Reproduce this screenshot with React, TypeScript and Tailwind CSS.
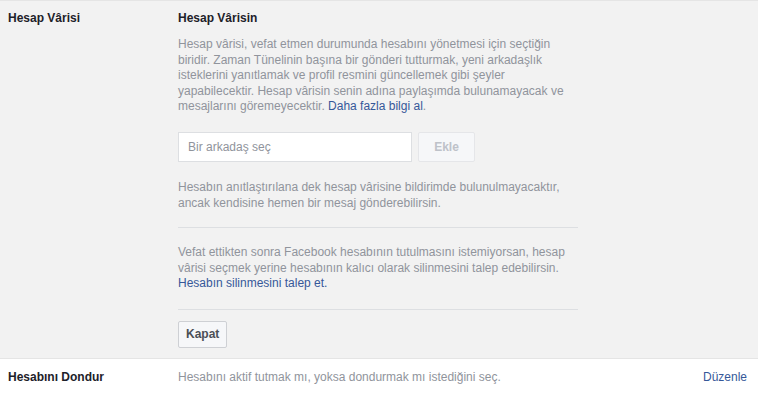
export default function App() {
  return (
    <div className="min-h-screen bg-white font-['Liberation_Sans',Arial,sans-serif] text-[12px] leading-[15.4px]">
      <section className="flex border-t border-b border-[#e5e5e5] bg-[#f2f2f2] pb-[10px]">
        <div className="w-[178px] shrink-0 pl-2 pt-[10px] font-bold text-[#1d2129]">Hesap Vârisi</div>
        <div className="w-[400px] pt-[10px]">
          <h3 className="font-bold text-[#1d2129]">Hesap Vârisin</h3>
          <p className="mt-[11px] text-[#90949c]">
            Hesap vârisi, vefat etmen durumunda hesabını yönetmesi için seçtiğin biridir. Zaman Tünelinin başına bir
            gönderi tutturmak, yeni arkadaşlık isteklerini yanıtlamak ve profil resmini güncellemek gibi şeyler
            yapabilecektir. Hesap vârisin senin adına paylaşımda bulunamayacak ve mesajlarını göremeyecektir.{" "}
            <a href="#" className="text-[#365899]">Daha fazla bilgi al</a>.
          </p>
          <div className="mt-[18px] flex gap-[6px]">
            <input
              type="text"
              placeholder="Bir arkadaş seç"
              className="h-[30px] w-[234px] border border-[#dddfe2] bg-white px-[9px] text-[12px] text-[#1d2129] outline-none placeholder:text-[#90949c]"
            />
            <button
              type="button"
              disabled
              className="h-[30px] w-[57px] rounded-[2px] border border-[#e5e6e9] bg-[#f6f7f9] font-bold text-[#bec2c9]"
            >
              Ekle
            </button>
          </div>
          <p className="mt-[18px] text-[#90949c]">
            Hesabın anıtlaştırılana dek hesap vârisine bildirimde bulunulmayacaktır, ancak kendisine hemen bir mesaj
            gönderebilirsin.
          </p>
          <hr className="mt-[16px] border-t border-[#dddfe2]" />
          <p className="mt-[17px] text-[#90949c]">
            Vefat ettikten sonra Facebook hesabının tutulmasını istemiyorsan, hesap vârisi seçmek yerine hesabının
            kalıcı olarak silinmesini talep edebilirsin.
            <br />
            <a href="#" className="text-[#365899]">Hesabın silinmesini talep et.</a>
          </p>
          <hr className="mt-[18px] border-t border-[#dddfe2]" />
          <button
            type="button"
            className="mt-[11px] h-[27px] rounded-[2px] border border-[#ced0d4] bg-[#f6f7f9] px-[7px] font-bold text-[#4b4f56]"
          >
            Kapat
          </button>
        </div>
      </section>
      <section className="flex items-center pt-[11px] pb-[10px] pr-[11px]">
        <div className="w-[178px] shrink-0 pl-2 font-bold text-[#1d2129]">Hesabını Dondur</div>
        <div className="flex-1 text-[#90949c]">Hesabını aktif tutmak mı, yoksa dondurmak mı istediğini seç.</div>
        <a href="#" className="text-[#365899]">Düzenle</a>
      </section>
    </div>
  );
}
